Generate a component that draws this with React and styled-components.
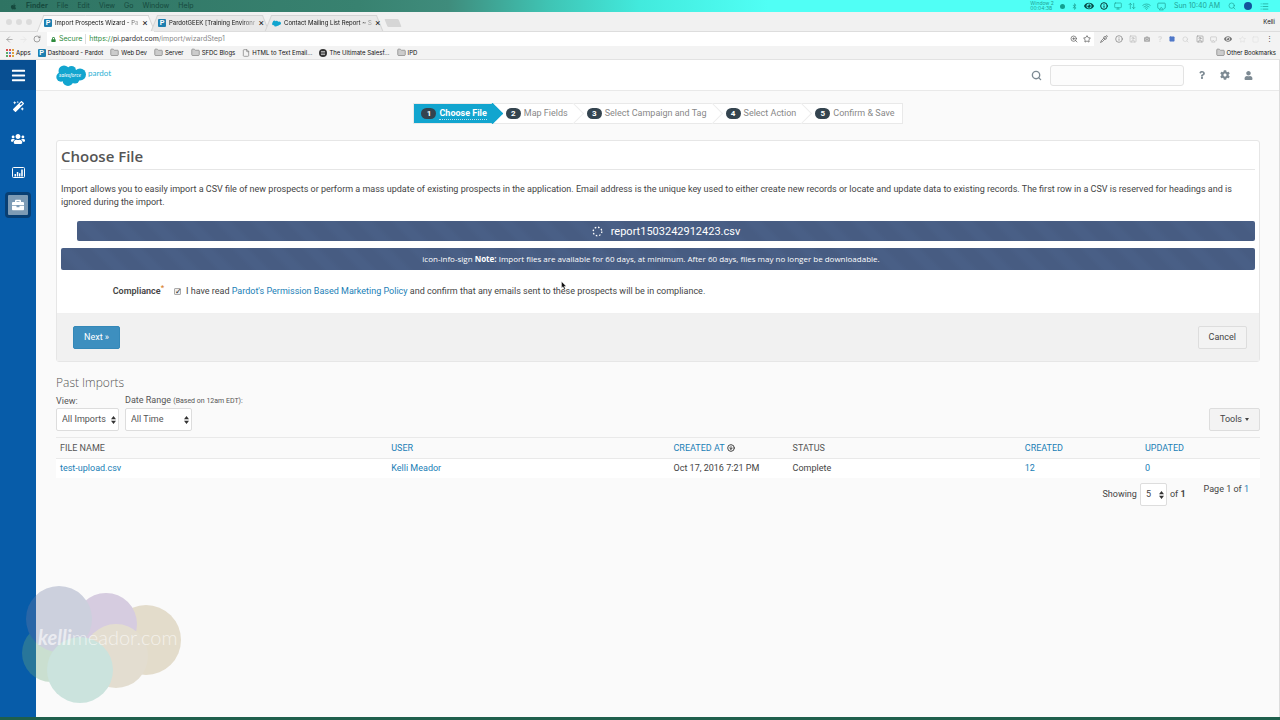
import { useState } from "react";
import styled, { createGlobalStyle, css } from "styled-components";
import {
  FaApple,
  FaBars,
  FaBriefcase,
  FaBluetoothB,
  FaCamera,
  FaCog,
  FaEye,
  FaLock,
  FaMagic,
  FaQuestion,
  FaUser,
  FaUsers,
} from "react-icons/fa";
import {
  Airplay,
  ArrowLeft,
  ArrowRight,
  ArrowUpDown,
  CircleArrowDown,
  File,
  Folder,
  Info,
  List,
  Monitor,
  Pipette,
  RotateCw,
  Search,
  Square,
  SquareUser,
  Star,
  Wifi,
  ZoomIn,
} from "lucide-react";

const MENUS = ["File", "Edit", "View", "Go", "Window", "Help"];

const TABS = [
  { title: "Import Prospects Wizard - Pa", icon: "pardot", active: true },
  { title: "PardotGEEK [Training Environr", icon: "pardot" },
  { title: "Contact Mailing List Report ~ S", icon: "cloud" },
];

const BOOKMARKS = [
  { name: "Apps", icon: "apps" },
  { name: "Dashboard - Pardot", icon: "pardot" },
  { name: "Web Dev", icon: "folder" },
  { name: "Server", icon: "folder" },
  { name: "SFDC Blogs", icon: "folder" },
  { name: "HTML to Text Email...", icon: "file" },
  { name: "The Ultimate Salesf...", icon: "globe" },
  { name: "IPD", icon: "folder" },
];

const STEPS = [
  "Choose File",
  "Map Fields",
  "Select Campaign and Tag",
  "Select Action",
  "Confirm & Save",
];

const COLUMNS = [331, 282, 119, 232, 120, 119];

const CloudShape = ({ width, height }) => (
  <svg width={width} height={height} viewBox="0 0 30 21" aria-hidden="true">
    <g fill="#12a5cf">
      <circle cx="8" cy="6" r="5.5" />
      <circle cx="15.500" cy="5.500" r="4.500" />
      <circle cx="24" cy="9.500" r="6" />
      <circle cx="5" cy="12" r="4.700" />
      <circle cx="12" cy="15.500" r="5.400" />
      <circle cx="19" cy="14" r="4.500" />
      <rect x="6" y="5" width="16" height="10" />
    </g>
  </svg>
);

const AppsIcon = () => (
  <svg width="8" height="8" viewBox="0 0 8 8" aria-hidden="true">
    {["#d9534f", "#d9534f", "#e0a040", "#58a867", "#5b86d6", "#e0a040", "#58a867", "#d9534f", "#d9a93c"].map(
      (fill, i) => (
        <rect key={i} x={(i % 3) * 3} y={Math.floor(i / 3) * 3} width="2" height="2" fill={fill} />
      )
    )}
  </svg>
);

const GlobeIcon = () => (
  <svg width="8" height="8" viewBox="0 0 8 8" aria-hidden="true">
    <circle cx="4" cy="4" r="4" fill="#333" />
    <path d="M2 2.500h4M2 4h4M2 5.500h4" stroke="#ddd" strokeWidth="0.700" />
  </svg>
);

const ChartIcon = () => (
  <svg width="13" height="11" viewBox="0 0 13 11" aria-hidden="true">
    <rect x="0.500" y="0.500" width="12" height="10" rx="1" fill="none" stroke="#fff" />
    <path d="M2.500 7h1.500v2.500h-1.500zM4.800 5h1.500v4.500h-1.500zM7 6.200h1.400v3.300h-1.400zM9.200 2.500h1.600v7h-1.600z" fill="#fff" />
  </svg>
);

const Spinner = () => (
  <svg width="11" height="11" viewBox="0 0 11 11" aria-hidden="true">
    <circle cx="5.500" cy="5.500" r="4.300" fill="none" stroke="#fff" strokeWidth="1.300" strokeDasharray="1.600 1.780" />
  </svg>
);

const SortArrows = () => (
  <svg width="5" height="8" viewBox="0 0 5 8" aria-hidden="true">
    <path d="M2.500 0L5 3.200H0zM2.500 8L0 4.800h5z" fill="#333" />
  </svg>
);

const Pointer = () => (
  <svg width="6" height="9" viewBox="0 0 6 9" aria-hidden="true">
    <path d="M0.500 0.500v6.500l1.500-1.300 1.200 2.600 1.200-.6-1.200-2.400h2z" fill="#111" stroke="#fff" strokeWidth="0.400" />
  </svg>
);

const SiteIcon = ({ icon }) => {
  if (icon === "pardot") return <PardotMark>P</PardotMark>;
  if (icon === "cloud") return <CloudShape width={9} height={7} />;
  if (icon === "apps") return <AppsIcon />;
  if (icon === "globe") return <GlobeIcon />;
  if (icon === "file") return <File size={8} color="#777" />;
  return <Folder size={9} color="#888" fill="#ccc" />;
};

const SelectBox = ({ id, value, options, width, onChange }) => (
  <SelectWrap $width={width}>
    <Select id={id} value={value} onChange={(evt) => onChange(evt.target.value)}>
      {options.map((option) => (
        <option key={option}>{option}</option>
      ))}
    </Select>
    <SelectArrow>
      <SortArrows />
    </SelectArrow>
  </SelectWrap>
);

const Watermark = () => (
  <WatermarkBox>
    <svg width="162" height="120" viewBox="0 0 162 120">
      <g opacity="0.330">
        <circle cx="124" cy="55" r="35" fill="#b7a06d" />
        <circle cx="84" cy="39" r="31" fill="#8f70ac" />
        <circle cx="94" cy="71" r="32" fill="#b7a57d" />
        <circle cx="29" cy="68" r="29" fill="#6cab7d" />
        <circle cx="37" cy="34" r="33" fill="#707da5" />
        <circle cx="58" cy="85" r="33" fill="#6db5a4" />
      </g>
      <text x="16" y="60" fill="#fff" fillOpacity="0.600" fontFamily="Lato, sans-serif" fontSize="20">
        <tspan fontWeight="700" fontStyle="italic">kelli</tspan>
        <tspan fontWeight="300">meador.com</tspan>
      </text>
    </svg>
  </WatermarkBox>
);

export default function App() {
  const [agreed, setAgreed] = useState(true);
  const [view, setView] = useState("All Imports");
  const [range, setRange] = useState("All Time");
  const [perPage, setPerPage] = useState("5");

  return (
    <Screen>
      <GlobalStyle />
      <MenuBar>
        <MenuGroup>
          <FaApple size={7} />
          <strong>Finder</strong>
          {MENUS.map((menu) => (
            <span key={menu}>{menu}</span>
          ))}
        </MenuGroup>
        <StatusGroup>
          <StatusIcons>
            <RecordTime>
              <span>Window 2</span>
              <span>00:04:38</span>
            </RecordTime>
            <Dot $color="#12a08f" $size={5} />
            <FaBluetoothB size={7} />
            <FaEye size={10} color="#064a46" />
            <Info size={8} color="#063a38" strokeWidth={3} />
            <Monitor size={8} />
            <ArrowUpDown size={8} />
            <Wifi size={9} />
            <Airplay size={9} />
          </StatusIcons>
          <span>Sun 10:40 AM</span>
          <Search size={8} />
          <Dot $color="#12549c" $size={8} />
          <List size={9} />
        </StatusGroup>
      </MenuBar>

      <TabStrip>
        <WindowButtons>
          <Dot $color="#dcdcdc" $size={6} />
          <Dot $color="#dcdcdc" $size={6} />
          <Dot $color="#dcdcdc" $size={6} />
        </WindowButtons>
        {TABS.map((tab) => (
          <Tab key={tab.title} $active={tab.active}>
            <SiteIcon icon={tab.icon} />
            <TabTitle>{tab.title}</TabTitle>
            <TabClose aria-label="Close tab">×</TabClose>
          </Tab>
        ))}
        <NewTab aria-label="New tab" />
        <Profile>Kelli</Profile>
      </TabStrip>

      <Toolbar>
        <NavIcons>
          <ArrowLeft size={9} color="#999" />
          <ArrowRight size={9} color="#e4e4e4" />
          <RotateCw size={8} color="#777" />
        </NavIcons>
        <AddressBar>
          <FaLock size={5} color="#2e8b3d" />
          <Secure>Secure</Secure>
          <Url>
            <em>https://</em>
            <b>pi.pardot.com</b>/import/wizardStep1
          </Url>
          <AddressIcons>
            <ZoomIn size={8} color="#555" />
            <Star size={8} color="#444" />
          </AddressIcons>
        </AddressBar>
        <Extensions>
          <Pipette size={8} color="#555" />
          <Info size={8} color="#777" />
          <SquareUser size={8} color="#bbb" />
          <FaCamera size={6} color="#aaa" />
          <FaQuestion size={6} color="#ddd" />
          <Square size={6} color="#5079c9" fill="#5079c9" />
          <Search size={7} color="#ccc" />
          <SquareUser size={8} color="#999" />
          <Airplay size={7} color="#bbb" />
          <FaEye size={8} color="#777" />
          <Star size={7} color="#ddd" />
          <Square size={7} color="#e2e2e2" />
          <span>⋮</span>
        </Extensions>
      </Toolbar>

      <BookmarkBar>
        {BOOKMARKS.map((bookmark) => (
          <Bookmark key={bookmark.name} href="#">
            <SiteIcon icon={bookmark.icon} />
            {bookmark.name}
          </Bookmark>
        ))}
        <Spacer />
        <Bookmark href="#">
          <SiteIcon icon="folder" />
          Other Bookmarks
        </Bookmark>
      </BookmarkBar>

      <Body>
        <Sidebar>
          <MenuToggle aria-label="Menu">
            <FaBars size={15} />
          </MenuToggle>
          <SideItems>
            <SideItem aria-label="Marketing">
              <FaMagic size={11} />
            </SideItem>
            <SideItem aria-label="Prospects">
              <FaUsers size={14} />
            </SideItem>
            <SideItem aria-label="Reports">
              <ChartIcon />
            </SideItem>
            <SideItem aria-label="Admin" $active>
              <FaBriefcase size={12} />
            </SideItem>
          </SideItems>
        </Sidebar>

        <Page>
          <Header>
            <Logo>
              <CloudShape width={30} height={21} />
              <LogoText>salesforce</LogoText>
              <LogoName>pardot</LogoName>
            </Logo>
            <HeaderTools>
              <Search size={11} strokeWidth={3} />
              <SearchInput aria-label="Search" />
              <FaQuestion size={8} />
              <FaCog size={10} />
              <FaUser size={9} />
            </HeaderTools>
          </Header>

          <Content>
            <Wizard>
              {STEPS.map((step, i) => (
                <Step key={step} $active={i === 0}>
                  <Badge>{i + 1}</Badge>
                  <StepName $active={i === 0}>{step}</StepName>
                </Step>
              ))}
            </Wizard>

            <Panel>
              <PanelBody>
                <PanelTitle>Choose File</PanelTitle>
                <Intro>
                  Import allows you to easily import a CSV file of new prospects or perform a mass update of existing
                  prospects in the application. Email address is the unique key used to either create new records or
                  locate and update data to existing records. The first row in a CSV is reserved for headings and is
                  ignored during the import.
                </Intro>
                <FileBar>
                  <Spinner />
                  report1503242912423.csv
                </FileBar>
                <NoteBar>
                  <span>
                    icon-info-sign <b>Note:</b> Import files are available for 60 days, at minimum. After 60 days,
                    files may no longer be downloadable.
                  </span>
                </NoteBar>
                <Compliance>
                  <ComplianceLabel htmlFor="compliance">
                    Compliance<sup>*</sup>
                  </ComplianceLabel>
                  <Checkbox
                    id="compliance"
                    type="checkbox"
                    checked={agreed}
                    onChange={(evt) => setAgreed(evt.target.checked)}
                  />
                  <span>
                    I have read <Link href="#">Pardot's Permission Based Marketing Policy</Link> and confirm that any
                    emails sent to these prospects will be in compliance.
                  </span>
                </Compliance>
              </PanelBody>
              <PanelFooter>
                <Button $primary>Next »</Button>
                <Button>Cancel</Button>
              </PanelFooter>
            </Panel>

            <SectionTitle>Past Imports</SectionTitle>
            <Filters>
              <Field>
                <label htmlFor="view">View:</label>
                <SelectBox
                  id="view"
                  width={63}
                  value={view}
                  options={["All Imports", "My Imports"]}
                  onChange={setView}
                />
              </Field>
              <Field>
                <label htmlFor="range">
                  Date Range <small>(Based on 12am EDT):</small>
                </label>
                <SelectBox
                  id="range"
                  width={67}
                  value={range}
                  options={["All Time", "Today", "Last 7 Days"]}
                  onChange={setRange}
                />
              </Field>
              <Spacer />
              <Button>
                Tools <Caret />
              </Button>
            </Filters>

            <Table>
              <colgroup>
                {COLUMNS.map((width, i) => (
                  <Col key={i} $width={width} />
                ))}
              </colgroup>
              <thead>
                <tr>
                  <th>FILE NAME</th>
                  <th>
                    <Link href="#">USER</Link>
                  </th>
                  <th>
                    <SortLink href="#">
                      CREATED AT <CircleArrowDown size={8} color="#444" strokeWidth={3} />
                    </SortLink>
                  </th>
                  <th>STATUS</th>
                  <th>
                    <Link href="#">CREATED</Link>
                  </th>
                  <th>
                    <Link href="#">UPDATED</Link>
                  </th>
                </tr>
              </thead>
              <tbody>
                <tr>
                  <td>
                    <Link href="#">test-upload.csv</Link>
                  </td>
                  <td>
                    <Link href="#">Kelli Meador</Link>
                  </td>
                  <td>Oct 17, 2016 7:21 PM</td>
                  <td>Complete</td>
                  <td>
                    <Link href="#">12</Link>
                  </td>
                  <td>
                    <Link href="#">0</Link>
                  </td>
                </tr>
              </tbody>
            </Table>

            <Pager>
              <Showing>
                <label htmlFor="perPage">Showing</label>
                <SelectBox
                  id="perPage"
                  width={27}
                  value={perPage}
                  options={["5", "10", "25"]}
                  onChange={setPerPage}
                />
                <span>
                  of <b>1</b>
                </span>
              </Showing>
              <span>
                Page 1 of <Link href="#">1</Link>
              </span>
            </Pager>
          </Content>
        </Page>
      </Body>
      <DesktopEdge />
      <Watermark />
      <Cursor>
        <Pointer />
      </Cursor>
    </Screen>
  );
}

const GlobalStyle = createGlobalStyle`
  * {
    box-sizing: border-box;
  }

  body {
    margin: 0;
    background: #fafafa;
    color: #444;
    font: 9px/13px Roboto, "Liberation Sans", sans-serif;
  }

  button, input, select {
    margin: 0;
    font: inherit;
    color: inherit;
  }

  svg {
    flex: none;
  }
`;

const systemFont = css`
  font-family: Inter, "Liberation Sans", sans-serif;
  font-size: 7px;
  line-height: 10px;
`;

const tabFont = css`
  font-family: Inter, "Liberation Sans", sans-serif;
  font-size: 6px;
  line-height: 10px;
`;

const Screen = styled.div`
  position: relative;
  min-height: 100vh;
  display: flex;
  flex-direction: column;
  overflow: hidden;
`;

const MenuBar = styled.div`
  ${systemFont}
  height: 12px;
  display: flex;
  align-items: center;
  justify-content: space-between;
  padding: 0 11px 0 10px;
  color: #164a3e;
  background: linear-gradient(90deg, #2f7463 0%, #388270 28%, #3f8c7c 35%, #3fc5b5 43%, #42eadd 50%, #50fff5 60%);
`;

const MenuGroup = styled.div`
  display: flex;
  align-items: center;
  gap: 9px;
`;

const StatusGroup = styled.div`
  display: flex;
  align-items: center;
  gap: 8px;
  color: #1fa396;
`;

const StatusIcons = styled.div`
  display: flex;
  align-items: center;
  gap: 6px;
`;

const RecordTime = styled.div`
  display: flex;
  flex-direction: column;
  font-size: 5px;
  line-height: 5px;
`;

const Dot = styled.span`
  width: ${({ $size }) => $size}px;
  height: ${({ $size }) => $size}px;
  border-radius: 50%;
  background: ${({ $color }) => $color};
`;

const TabStrip = styled.div`
  ${tabFont}
  height: 20px;
  display: flex;
  align-items: flex-end;
  background: #f1f1f1;
  color: #111;
  border-bottom: 1px solid #ddd;
`;

const WindowButtons = styled.div`
  width: 38px;
  height: 18px;
  display: flex;
  align-items: center;
  gap: 4px;
  padding-left: 6px;
`;

const Tab = styled.div`
  position: relative;
  z-index: 0;
  width: 114px;
  height: 16px;
  display: flex;
  align-items: center;
  gap: 3px;
  padding: 0 4px 0 6px;

  &::before,
  &::after {
    content: "";
    position: absolute;
    z-index: -1;
    top: 0;
    bottom: ${({ $active }) => ($active ? "-1px" : "0")};
    background: ${({ $active }) => ($active ? "#f9f9f9" : "#e9e9e9")};
    border-top: 1px solid #d4d4d4;
  }

  &::before {
    left: 2px;
    right: 50%;
    transform: skewX(-22deg);
    border-left: 1px solid #d4d4d4;
  }

  &::after {
    left: 45%;
    right: 0;
    transform: skewX(22deg);
    border-right: 1px solid #d4d4d4;
  }
`;

const TabTitle = styled.span`
  flex: 1;
  white-space: nowrap;
  mask-image: linear-gradient(90deg, #000 85%, #0004);
`;

const TabClose = styled.button`
  padding: 0;
  border: 0;
  background: none;
  font-size: 9px;
`;

const NewTab = styled.button`
  width: 14px;
  height: 8px;
  margin: 0 0 4px 6px;
  padding: 0;
  border: 0;
  border-radius: 1px;
  background: #d6d6d6;
  transform: skewX(22deg);
`;

const Profile = styled.span`
  align-self: center;
  margin-left: auto;
  padding-right: 5px;
`;

const PardotMark = styled.span`
  flex: none;
  width: 8px;
  height: 8px;
  border-radius: 1px;
  background: #1d7fb0;
  color: #fff;
  font: bold 7px/8px "Liberation Sans", sans-serif;
  text-align: center;
`;

const Toolbar = styled.div`
  ${systemFont}
  height: 14px;
  display: flex;
  align-items: stretch;
  background: #f3f3f3;
`;

const NavIcons = styled.div`
  width: 47px;
  display: flex;
  align-items: center;
  gap: 5px;
  padding-left: 5px;
`;

const AddressBar = styled.div`
  flex: 1;
  display: flex;
  align-items: center;
  gap: 3px;
  padding: 0 3px 0 4px;
  background: #fff;
`;

const AddressIcons = styled.div`
  display: flex;
  gap: 5px;
`;

const Secure = styled.span`
  padding-right: 3px;
  color: #2e8b3d;
  border-right: 1px solid #ddd;
`;

const Url = styled.span`
  flex: 1;
  color: #888;

  em {
    color: #2e8b3d;
    font-style: normal;
  }

  b {
    color: #333;
    font-weight: 400;
  }
`;

const Extensions = styled.div`
  width: 186px;
  display: flex;
  align-items: center;
  justify-content: space-between;
  padding: 0 7px 0 6px;
`;

const BookmarkBar = styled.div`
  ${tabFont}
  height: 14px;
  display: flex;
  align-items: center;
  gap: 7px;
  padding: 0 4px 0 6px;
  background: #f3f3f3;
  border-bottom: 1px solid #e2e2e2;
`;

const Bookmark = styled.a`
  display: flex;
  align-items: center;
  gap: 2px;
  color: #111;
  text-decoration: none;
  white-space: nowrap;
`;

const Spacer = styled.div`
  flex: 1;
`;

const Body = styled.div`
  flex: 1;
  display: flex;
`;

const Sidebar = styled.nav`
  width: 36px;
  background: #075ca9;
`;

const MenuToggle = styled.button`
  width: 100%;
  height: 30px;
  display: grid;
  place-items: center;
  padding: 0;
  border: 0;
  background: #084f92;
  color: #fff;
`;

const SideItems = styled.div`
  display: flex;
  flex-direction: column;
  align-items: center;
  gap: 7px;
  padding-top: 3px;
`;

const SideItem = styled.button`
  width: 26px;
  height: 26px;
  display: grid;
  place-items: center;
  padding: 0;
  border: 3px solid ${({ $active }) => ($active ? "#083f73" : "transparent")};
  border-radius: 4px;
  background: ${({ $active }) => ($active ? "#7d9bb5" : "transparent")};
  color: #fff;
`;

const Page = styled.div`
  flex: 1;
  min-width: 0;
  border-right: 1px solid #ddd;
`;

const Header = styled.header`
  height: 31px;
  display: flex;
  align-items: center;
  justify-content: space-between;
  padding: 0 26px 0 20px;
  background: #fff;
  border-bottom: 1px solid #e9e9e9;
`;

const Logo = styled.div`
  position: relative;
  display: flex;
  align-items: center;
  gap: 2px;
`;

const LogoText = styled.span`
  position: absolute;
  left: 3px;
  color: #fff;
  font: italic 5px/8px "Noto Sans", sans-serif;
`;

const LogoName = styled.span`
  color: #2ab0d4;
  font: 8px/10px Lato, sans-serif;
  padding-bottom: 4px;
`;

const HeaderTools = styled.div`
  display: flex;
  align-items: center;
  gap: 14px;
  color: #7d8a93;
`;

const SearchInput = styled.input`
  width: 134px;
  height: 21px;
  margin-left: -6px;
  padding: 0 6px;
  border: 1px solid #e3e3e3;
  border-radius: 3px;
  background: #fcfcfc;
`;

const Content = styled.main`
  padding: 12px 19px 0 20px;
`;

const Wizard = styled.ol`
  width: fit-content;
  height: 21px;
  display: flex;
  margin: 0 auto 16px;
  padding: 0;
  list-style: none;
  background: #fff;
  border: 1px solid #e9e9e9;
`;

const Step = styled.li`
  position: relative;
  display: flex;
  align-items: center;
  gap: 3px;
  padding: 0 7px 0 12px;
  color: #888;

  &:first-child {
    padding-left: 7px;
    background: #12a5cf;
    color: #fff;
  }

  &:not(:last-child)::after {
    content: "";
    position: absolute;
    z-index: 1;
    top: 2px;
    right: -6px;
    width: 14px;
    height: 14px;
    transform: rotate(45deg);
    border: 1px solid ${({ $active }) => ($active ? "#12a5cf" : "#ececec")};
    border-width: 1px 1px 0 0;
    background: ${({ $active }) => ($active ? "#12a5cf" : "#fff")};
  }
`;

const Badge = styled.span`
  z-index: 2;
  width: 15px;
  border-radius: 6px;
  background: #34444f;
  color: #fff;
  font-size: 8px;
  font-weight: 700;
  line-height: 11px;
  text-align: center;
`;

const StepName = styled.span`
  z-index: 2;
  font-weight: ${({ $active }) => ($active ? 700 : 400)};
  border-bottom: 1px dotted ${({ $active }) => ($active ? "#b9e4f1" : "transparent")};
  line-height: 12px;
`;

const Panel = styled.section`
  border: 1px solid #e6e6e6;
  border-radius: 3px;
  background: #fff;
`;

const PanelBody = styled.div`
  padding: 5px 4px 15px;
`;

const PanelTitle = styled.h1`
  margin: 0 0 13px;
  padding-bottom: 3px;
  border-bottom: 1px solid #e6e6e6;
  color: #555;
  font: 600 15px/20px "Open Sans", sans-serif;
`;

const Intro = styled.p`
  margin: 0 0 12px;
`;

const Bar = styled.div`
  display: flex;
  align-items: center;
  justify-content: center;
  border-radius: 2px;
  background: repeating-linear-gradient(45deg, #475c82 0 9px, #495f86 14px 20px, #475c82 25px);
  color: #fff;
`;

const FileBar = styled(Bar)`
  height: 20px;
  gap: 8px;
  margin: 0 0 7px 16px;
  font-size: 11px;
`;

const NoteBar = styled(Bar)`
  height: 22px;
  margin-bottom: 15px;
  padding: 0 14px 2px 0;
  font: 500 8px/11px "Open Sans", sans-serif;
`;

const Compliance = styled.div`
  display: flex;
  align-items: center;
  gap: 5px;
`;

const ComplianceLabel = styled.label`
  width: 103px;
  font-weight: 600;
  text-align: right;

  sup {
    color: #d9822b;
    line-height: 0;
  }
`;

const Checkbox = styled.input`
  appearance: none;
  width: 7px;
  height: 7px;
  margin-left: 5px;
  border: 1px solid #aaa;
  border-radius: 1px;
  background: #eee;

  &:checked::after {
    content: "✓";
    display: block;
    color: #222;
    font: bold 8px/5px "DejaVu Sans", sans-serif;
  }
`;

const Link = styled.a`
  color: #1a80b6;
  text-decoration: none;
`;

const SortLink = styled(Link)`
  display: flex;
  align-items: center;
  gap: 2px;
`;

const PanelFooter = styled.div`
  display: flex;
  justify-content: space-between;
  padding: 12px 12px 12px 16px;
  border-top: 1px solid #f0f0f0;
  background: #f1f1f1;
`;

const Button = styled.button`
  height: 23px;
  display: flex;
  align-items: center;
  gap: 3px;
  padding: 0 10px;
  border: 1px solid ${({ $primary }) => ($primary ? "#3488b8" : "#ddd")};
  border-radius: 2px;
  background: ${({ $primary }) => ($primary ? "#3d8fbf" : "#f3f3f3")};
  color: ${({ $primary }) => ($primary ? "#fff" : "#444")};
`;

const Caret = styled.span`
  border: 2px solid transparent;
  border-top: 3px solid #444;
  border-bottom: 0;
`;

const SectionTitle = styled.h2`
  margin: 12px 0 3px;
  color: #555;
  font: 300 12px/17px "Open Sans", sans-serif;
`;

const Filters = styled.div`
  display: flex;
  align-items: flex-end;
  gap: 6px;
  margin-bottom: 6px;
`;

const Field = styled.div`
  width: 63px;
  display: flex;
  flex-direction: column;
  color: #555;
  white-space: nowrap;

  small {
    font-size: 7px;
  }
`;

const SelectWrap = styled.div`
  position: relative;
  width: ${({ $width }) => $width}px;
`;

const Select = styled.select`
  appearance: none;
  width: 100%;
  height: 23px;
  padding: 0 5px;
  border: 1px solid #ddd;
  border-radius: 2px;
  background: #fff;
`;

const SelectArrow = styled.span`
  position: absolute;
  top: 8px;
  right: 3px;
  display: flex;
  pointer-events: none;
`;

const Table = styled.table`
  width: 100%;
  table-layout: fixed;
  border-collapse: collapse;

  th,
  td {
    padding: 3px 4px;
    text-align: left;
    font-weight: 400;
    white-space: nowrap;
  }

  th {
    padding: 4px;
    color: #555;
    line-height: 12px;
    border-top: 1px solid #e9e9e9;
    border-bottom: 1px solid #e9e9e9;
  }

  tbody tr {
    background: #fff;
  }
`;

const Col = styled.col`
  width: ${({ $width }) => $width}px;
`;

const Pager = styled.div`
  display: flex;
  justify-content: flex-end;
  gap: 18px;
  padding: 5px 11px 0 0;
`;

const Showing = styled.div`
  display: flex;
  align-items: center;
  gap: 3px;
`;

const DesktopEdge = styled.div`
  height: 3px;
  background: #1f5f4c;
`;

const WatermarkBox = styled.div`
  position: absolute;
  left: 22px;
  bottom: 15px;
  display: flex;
  pointer-events: none;
`;

const Cursor = styled.div`
  position: absolute;
  left: 561px;
  top: 281px;
  pointer-events: none;
`;
